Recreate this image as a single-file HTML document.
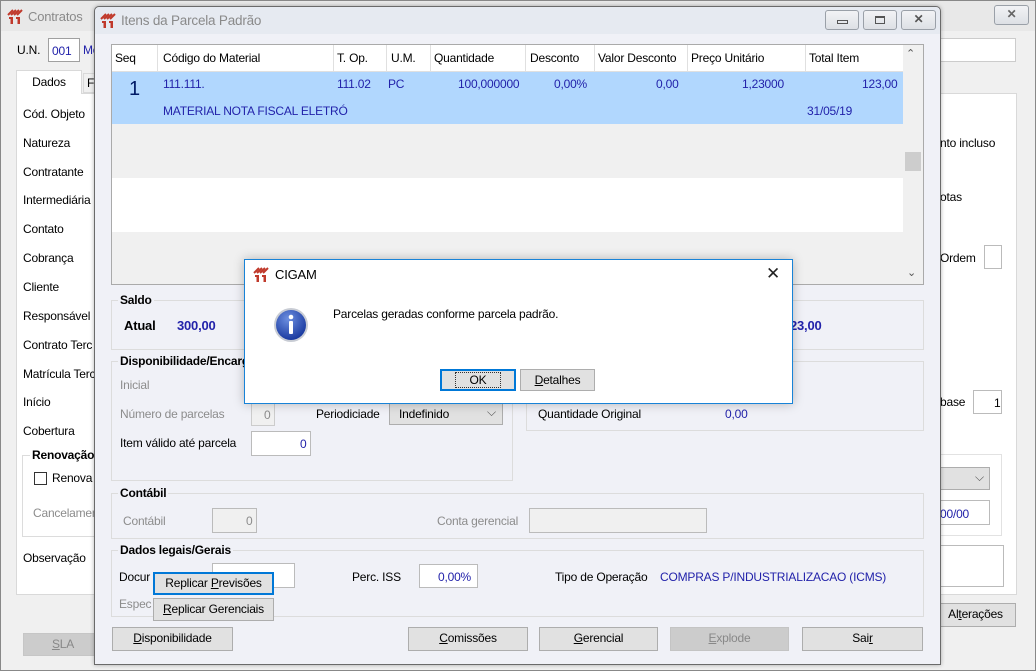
<!DOCTYPE html>
<html><head><meta charset="utf-8"><style>
*{box-sizing:border-box;margin:0;padding:0}
body{width:1036px;height:671px;overflow:hidden;background:#f0f0f0;font-family:"Liberation Sans",sans-serif;font-size:12px;color:#000;position:relative;letter-spacing:-0.2px}
.a{position:absolute;white-space:nowrap}
.btn{position:absolute;background:#e1e1e1;border:1px solid #adadad;text-align:center;line-height:20px}
.tb{position:absolute;background:linear-gradient(#f2f3f5,#dde0e5);border:1px solid #9aa0a8;border-radius:3px;text-align:center}
.inp{position:absolute;background:#fff;border:1px solid #a0a0a0}
.grp{position:absolute;border:1px solid #dcdcdc}
.gt{position:absolute;font-weight:bold;background:#f0f1f7;padding:0 2px;top:-9px;left:6px}
.blue{color:#2222aa}
.dis{color:#8c8c8c}
u{text-decoration:underline}
</style></head><body>
<svg width="0" height="0" style="position:absolute"><defs><g id="logo"><path d="M1 7 L6 2 M4 7 L9 2 M7 7 L12 2 M10 7 L15 2" stroke="#c0392b" stroke-width="2" fill="none"/><path d="M2 9 h4 v7 h-2.5 v-5 h-1.5z M9 9 h4 v7 h-2.5 v-5 h-1.5z" fill="#c0392b"/></g></defs></svg>
<div class="a" style="left:0;top:0;width:1036px;height:671px;background:#f0f0f0;border:1px solid #888"></div>
<div class="a" style="left:1px;top:1px;width:1034px;height:30px;background:#e8e8e8"></div>
<svg class="a" style="left:7px;top:8px" width="16" height="16" viewBox="0 0 16 16"><use href="#logo"/></svg>
<div class="a" style="left:28px;top:9px;font-size:13px;color:#8a8a8a">Contratos</div>
<div class="tb" style="left:994px;top:5px;width:35px;height:20px;line-height:17px;color:#666;font-weight:bold">✕</div>
<div class="a" style="left:17px;top:43px">U.N.</div>
<div class="inp" style="left:48px;top:38px;width:32px;height:24px"></div>
<div class="a blue" style="left:52px;top:44px">001</div>
<div class="a blue" style="left:83px;top:43px">Mo</div>
<div class="inp" style="left:938px;top:38px;width:78px;height:24px;border-color:#ccc"></div>
<div class="a" style="left:16px;top:93px;width:1001px;height:502px;background:#fff;border:1px solid #d9d9d9"></div>
<div class="a" style="left:16px;top:70px;width:66px;height:24px;background:#fff;border:1px solid #d9d9d9;border-bottom:none;text-align:center;line-height:22px">Dados</div>
<div class="a" style="left:83px;top:73px;width:14px;height:20px;background:#f0f0f0;border:1px solid #d9d9d9;padding-left:3px;line-height:18px">F</div>
<div class="a" style="left:23px;top:107px">Cód. Objeto</div>
<div class="a" style="left:23px;top:136px">Natureza</div>
<div class="a" style="left:23px;top:165px">Contratante</div>
<div class="a" style="left:23px;top:193px">Intermediária</div>
<div class="a" style="left:23px;top:222px">Contato</div>
<div class="a" style="left:23px;top:251px">Cobrança</div>
<div class="a" style="left:23px;top:280px">Cliente</div>
<div class="a" style="left:23px;top:309px">Responsável</div>
<div class="a" style="left:23px;top:338px">Contrato Terc</div>
<div class="a" style="left:23px;top:367px">Matrícula Terc</div>
<div class="a" style="left:23px;top:395px">Início</div>
<div class="a" style="left:23px;top:424px">Cobertura</div>
<div class="a" style="left:22px;top:455px;width:80px;height:82px;border:1px solid #dcdcdc"></div>
<div class="a" style="left:30px;top:448px;font-weight:bold;background:#fff;padding:0 2px">Renovação</div>
<div class="a" style="left:34px;top:472px;width:13px;height:13px;border:1px solid #333;background:#fff"></div>
<div class="a" style="left:52px;top:471px">Renova</div>
<div class="a dis" style="left:33px;top:506px">Cancelamento</div>
<div class="a" style="left:23px;top:551px">Observação</div>
<div class="btn" style="left:23px;top:633px;width:80px;height:23px;background:#cccccc;border-color:#c6c6c6;color:#888"><u>S</u>LA</div>
<div class="a" style="left:940px;top:136px">nto incluso</div>
<div class="a" style="left:940px;top:190px">otas</div>
<div class="a" style="left:940px;top:251px">Ordem</div>
<div class="inp" style="left:984px;top:245px;width:18px;height:24px;border-color:#bbb"></div>
<div class="a" style="left:940px;top:395px">base</div>
<div class="inp" style="left:973px;top:390px;width:29px;height:24px;border-color:#bbb"></div>
<div class="a" style="left:994px;top:396px">1</div>
<div class="a" style="left:920px;top:454px;width:82px;height:82px;border:1px solid #e2e2e2"></div>
<div class="a" style="left:920px;top:467px;width:70px;height:23px;background:#e1e1e1;border:1px solid #adadad"></div>
<div class="a" style="left:975px;top:470px;color:#555">⌵</div>
<div class="inp" style="left:920px;top:500px;width:70px;height:25px;border-color:#bbb"></div>
<div class="a blue" style="left:940px;top:507px">00/00</div>
<div class="inp" style="left:920px;top:545px;width:84px;height:42px;border-color:#bbb"></div>
<div class="btn" style="left:935px;top:603px;width:81px;height:24px">Al<u>t</u>erações</div>

<div class="a" style="left:94px;top:6px;width:847px;height:659px;background:#f0f1f7;border:1px solid #6a6a6a;border-radius:5px 5px 0 0;box-shadow:0 0 4px rgba(0,0,0,.3)"></div>
<div class="a" style="left:95px;top:7px;width:845px;height:27px;background:#e6eaf1;border-radius:5px 5px 0 0"></div>
<svg class="a" style="left:100px;top:12px" width="16" height="16" viewBox="0 0 16 16"><use href="#logo"/></svg>
<div class="a" style="left:121px;top:13px;font-size:13.5px;color:#8a8a8a">Itens da Parcela Padrão</div>
<div class="tb" style="left:825px;top:10px;width:34px;height:20px"><div style="margin:9px auto 0;width:11px;height:4px;border:1px solid #555"></div></div>
<div class="tb" style="left:863px;top:10px;width:34px;height:20px"><div style="margin:5px auto 0;width:10px;height:8px;border:1px solid #555;border-top-width:2px"></div></div>
<div class="tb" style="left:901px;top:10px;width:35px;height:20px;line-height:17px;color:#555;font-weight:bold">✕</div>
<div class="a" style="left:111px;top:44px;width:813px;height:241px;background:#fff;border:1px solid #aaa"></div>
<div class="a" style="left:112px;top:72px;width:791px;height:52px;background:#b1d7fe"></div>
<div class="a" style="left:112px;top:124px;width:791px;height:54px;background:#f0f0f0"></div>
<div class="a" style="left:112px;top:232px;width:791px;height:52px;background:#f0f0f0"></div>
<div class="a" style="left:112px;top:45px;width:791px;height:27px;background:#fff;border-bottom:1px solid #e0e0e0"></div>
<div class="a" style="left:157px;top:45px;height:27px;border-left:1px solid #e0e0e0"></div>
<div class="a" style="left:333px;top:45px;height:27px;border-left:1px solid #e0e0e0"></div>
<div class="a" style="left:386px;top:45px;height:27px;border-left:1px solid #e0e0e0"></div>
<div class="a" style="left:430px;top:45px;height:27px;border-left:1px solid #e0e0e0"></div>
<div class="a" style="left:525px;top:45px;height:27px;border-left:1px solid #e0e0e0"></div>
<div class="a" style="left:594px;top:45px;height:27px;border-left:1px solid #e0e0e0"></div>
<div class="a" style="left:687px;top:45px;height:27px;border-left:1px solid #e0e0e0"></div>
<div class="a" style="left:805px;top:45px;height:27px;border-left:1px solid #e0e0e0"></div>
<div class="a" style="left:115px;top:51px">Seq</div>
<div class="a" style="left:163px;top:51px">Código do Material</div>
<div class="a" style="left:337px;top:51px">T. Op.</div>
<div class="a" style="left:391px;top:51px">U.M.</div>
<div class="a" style="left:434px;top:51px">Quantidade</div>
<div class="a" style="left:530px;top:51px">Desconto</div>
<div class="a" style="left:598px;top:51px">Valor Desconto</div>
<div class="a" style="left:691px;top:51px">Preço Unitário</div>
<div class="a" style="left:809px;top:51px">Total Item</div>
<div class="a" style="left:129px;top:78px;font-size:20px;color:#001a66">1</div>
<div class="a blue" style="left:163px;top:77px">111.111.</div>
<div class="a blue" style="left:337px;top:77px">111.02</div>
<div class="a blue" style="left:388px;top:77px">PC</div>
<div class="a blue" style="left:458px;top:77px">100,000000</div>
<div class="a blue" style="left:554px;top:77px">0,00%</div>
<div class="a blue" style="left:656px;top:77px">0,00</div>
<div class="a blue" style="left:742px;top:77px">1,23000</div>
<div class="a blue" style="left:862px;top:77px">123,00</div>
<div class="a blue" style="left:163px;top:104px">MATERIAL NOTA FISCAL ELETRÓ</div>
<div class="a blue" style="left:807px;top:104px">31/05/19</div>
<div class="a" style="left:903px;top:45px;width:20px;height:239px;background:#f0f0f0"></div>
<div class="a" style="left:906px;top:47px;color:#555;font-size:11px">⌃</div>
<div class="a" style="left:905px;top:152px;width:16px;height:19px;background:#cdcdcd"></div>
<div class="a" style="left:907px;top:266px;color:#555;font-size:11px">⌄</div>
<div class="grp" style="left:111px;top:300px;width:813px;height:50px"><div class="gt" style="top:-8px">Saldo</div></div>
<div class="a" style="left:124px;top:318px;font-weight:bold;font-size:13px">Atual</div>
<div class="a blue" style="left:177px;top:318px;font-weight:bold;font-size:13px">300,00</div>
<div class="a blue" style="left:790px;top:318px;font-weight:bold;font-size:13px">23,00</div>
<div class="grp" style="left:111px;top:361px;width:402px;height:120px"><div class="gt" style="top:-8px">Disponibilidade/Encargos</div></div>
<div class="a dis" style="left:120px;top:378px">Inicial</div>
<div class="a dis" style="left:120px;top:407px">Número de parcelas</div>
<div class="a" style="left:251px;top:402px;width:24px;height:24px;background:#f0f0f0;border:1px solid #ccc"></div>
<div class="a dis" style="left:264px;top:408px">0</div>
<div class="a" style="left:316px;top:407px">Periodiciade</div>
<div class="a" style="left:389px;top:402px;width:114px;height:23px;background:#e1e1e1;border:1px solid #adadad"></div>
<div class="a" style="left:399px;top:407px">Indefinido</div>
<div class="a" style="left:487px;top:405px;color:#555">⌵</div>
<div class="a" style="left:120px;top:436px">Item válido até parcela</div>
<div class="inp" style="left:251px;top:431px;width:60px;height:25px;border-color:#bbb"></div>
<div class="a blue" style="left:300px;top:437px">0</div>
<div class="grp" style="left:526px;top:361px;width:398px;height:70px"></div>
<div class="a" style="left:538px;top:407px">Quantidade Original</div>
<div class="a blue" style="left:725px;top:407px">0,00</div>
<div class="grp" style="left:111px;top:493px;width:813px;height:46px"><div class="gt" style="top:-8px">Contábil</div></div>
<div class="a dis" style="left:123px;top:514px">Contábil</div>
<div class="a" style="left:212px;top:508px;width:45px;height:25px;background:#f0f0f0;border:1px solid #bbb"></div>
<div class="a dis" style="left:246px;top:514px">0</div>
<div class="a dis" style="left:437px;top:514px">Conta gerencial</div>
<div class="a" style="left:529px;top:508px;width:178px;height:25px;background:#f0f0f0;border:1px solid #bbb"></div>
<div class="grp" style="left:111px;top:550px;width:813px;height:67px"><div class="gt" style="top:-8px">Dados legais/Gerais</div></div>
<div class="a" style="left:119px;top:570px">Docur</div>
<div class="a dis" style="left:119px;top:597px">Espec</div>
<div class="inp" style="left:212px;top:563px;width:83px;height:25px;border-color:#bbb"></div>
<div class="a" style="left:352px;top:570px">Perc. ISS</div>
<div class="inp" style="left:419px;top:564px;width:59px;height:24px;border-color:#bbb"></div>
<div class="a blue" style="left:438px;top:570px">0,00%</div>
<div class="a" style="left:555px;top:570px">Tipo de Operação</div>
<div class="a blue" style="left:660px;top:570px">COMPRAS P/INDUSTRIALIZACAO (ICMS)</div>
<div class="btn" style="left:153px;top:572px;width:121px;height:23px;border:2px solid #0078d7;line-height:19px">Replicar <u>P</u>revisões</div>
<div class="btn" style="left:153px;top:598px;width:121px;height:23px"><u>R</u>eplicar Gerenciais</div>
<div class="btn" style="left:112px;top:627px;width:121px;height:24px"><u>D</u>isponibilidade</div>
<div class="btn" style="left:408px;top:627px;width:120px;height:24px"><u>C</u>omissões</div>
<div class="btn" style="left:539px;top:627px;width:119px;height:24px"><u>G</u>erencial</div>
<div class="btn" style="left:670px;top:627px;width:119px;height:24px;background:#cccccc;border-color:#c4c4c4;color:#888"><u>E</u>xplode</div>
<div class="btn" style="left:802px;top:627px;width:121px;height:24px">Sai<u>r</u></div>

<div class="a" style="left:244px;top:259px;width:549px;height:145px;background:#fff;border:1px solid #1883d7;box-shadow:0 0 10px rgba(0,0,0,.25)"></div>
<svg class="a" style="left:253px;top:266px" width="16" height="16" viewBox="0 0 16 16"><use href="#logo"/></svg>
<div class="a" style="left:275px;top:267px;font-size:13px">CIGAM</div>
<div class="a" style="left:766px;top:264px;font-size:17px;color:#222">✕</div>
<svg class="a" style="left:273px;top:307px" width="36" height="36" viewBox="0 0 36 36"><defs><radialGradient id="g" cx="40%" cy="30%" r="70%"><stop offset="0" stop-color="#6d8fe0"/><stop offset="1" stop-color="#1a3aa0"/></radialGradient></defs><circle cx="18" cy="18" r="17" fill="#c8ccd4"/><circle cx="18" cy="18" r="15" fill="url(#g)"/><circle cx="18" cy="10" r="2.3" fill="#fff"/><rect x="16" y="14" width="4" height="13" rx="1" fill="#fff"/></svg>
<div class="a" style="left:333px;top:307px">Parcelas geradas conforme parcela padrão.</div>
<div class="btn" style="left:440px;top:369px;width:76px;height:22px;border:2px solid #0078d7;line-height:18px"><span style="outline:1px dotted #333;padding:0 14px">OK</span></div>
<div class="btn" style="left:520px;top:369px;width:75px;height:22px"><u>D</u>etalhes</div>
</body></html>
